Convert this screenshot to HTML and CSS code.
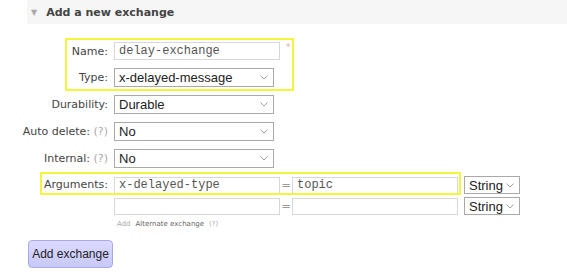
FILE: index.html
```html
<!DOCTYPE html>
<html lang="en">
<head>
    <meta charset="UTF-8">
    <title>Add a new exchange</title>
    <link rel="stylesheet" href="styles.css">
</head>
<body>
    <div class="page">
        <!-- Section header -->
        <div class="section-header">
            <span class="arrow">&#9660;</span>
            <span class="section-title">Add a new exchange</span>
        </div>

        <form class="form" onsubmit="return false">
            <div class="row">
                <label class="label" for="name">Name:</label>
                <input class="text-input name-input" id="name" type="text" value="delay-exchange">
                <span class="mandatory">*</span>
            </div>

            <div class="row">
                <label class="label">Type:</label>
                <div class="select">
                    <span>x-delayed-message</span>
                    <svg class="chevron" width="8" height="5" viewBox="0 0 8 5"><path d="M0.5 0.5 L4 4 L7.5 0.5" fill="none" stroke="#a0a0a0" stroke-width="1"/></svg>
                </div>
            </div>

            <div class="row">
                <label class="label">Durability:</label>
                <div class="select">
                    <span>Durable</span>
                    <svg class="chevron" width="8" height="5" viewBox="0 0 8 5"><path d="M0.5 0.5 L4 4 L7.5 0.5" fill="none" stroke="#a0a0a0" stroke-width="1"/></svg>
                </div>
            </div>

            <div class="row">
                <label class="label">Auto delete: <span class="help">(?)</span></label>
                <div class="select">
                    <span>No</span>
                    <svg class="chevron" width="8" height="5" viewBox="0 0 8 5"><path d="M0.5 0.5 L4 4 L7.5 0.5" fill="none" stroke="#a0a0a0" stroke-width="1"/></svg>
                </div>
            </div>

            <div class="row">
                <label class="label">Internal: <span class="help">(?)</span></label>
                <div class="select">
                    <span>No</span>
                    <svg class="chevron" width="8" height="5" viewBox="0 0 8 5"><path d="M0.5 0.5 L4 4 L7.5 0.5" fill="none" stroke="#a0a0a0" stroke-width="1"/></svg>
                </div>
            </div>

            <div class="row args-row">
                <label class="label">Arguments:</label>
                <div class="args">
                    <div class="arg">
                        <input class="text-input arg-input" type="text" value="x-delayed-type">
                        <span class="equals">=</span>
                        <input class="text-input arg-input" type="text" value="topic">
                        <div class="select small-select">
                            <span>String</span>
                            <svg class="chevron" width="8" height="5" viewBox="0 0 8 5"><path d="M0.5 0.5 L4 4 L7.5 0.5" fill="none" stroke="#a0a0a0" stroke-width="1"/></svg>
                        </div>
                    </div>
                    <div class="arg">
                        <input class="text-input arg-input" type="text" value="">
                        <span class="equals">=</span>
                        <input class="text-input arg-input" type="text" value="">
                        <div class="select small-select">
                            <span>String</span>
                            <svg class="chevron" width="8" height="5" viewBox="0 0 8 5"><path d="M0.5 0.5 L4 4 L7.5 0.5" fill="none" stroke="#a0a0a0" stroke-width="1"/></svg>
                        </div>
                    </div>
                    <div class="arg-hints">
                        <span class="add">Add</span>
                        <span class="hint">Alternate exchange</span>
                        <span class="help">(?)</span>
                    </div>
                </div>
            </div>

            <button class="submit" type="submit">Add exchange</button>
        </form>

        <!-- yellow annotation boxes -->
        <div class="highlight hl-name"></div>
        <div class="highlight hl-args"></div>
    </div>
</body>
</html>
```

FILE: styles.css
```css
body {
    margin: 0;
    background: #fff;
    font-family: "DejaVu Sans", Verdana, sans-serif;
    font-size: 11px;
    color: #444;
}
.page {
    position: relative;
    width: 567px;
    height: 276px;
    overflow: hidden;
}
.section-header {
    margin-left: 27px;
    height: 24px;
    background: #f6f6f6;
    display: flex;
    align-items: center;
    gap: 9px;
    padding-left: 4px;
}
.arrow {
    font-size: 8px;
    color: #aaa;
}
.section-title {
    font-weight: bold;
    font-size: 11px;
    color: #444;
}
.form {
    display: flex;
    flex-direction: column;
    gap: 8px;
    padding-top: 18px;
}
.row {
    display: flex;
    align-items: center;
}
.args-row {
    align-items: flex-start;
}
.label {
    width: 108px;
    padding-right: 6px;
    text-align: right;
    flex-shrink: 0;
    white-space: nowrap;
    color: #444;
}
.args-row .label {
    padding-top: 2px;
}
.help {
    color: #aaa;
}
.text-input {
    box-sizing: border-box;
    height: 18px;
    border: 1px solid #d8d8d8;
    background: #fff;
    padding: 0 4px;
    font-family: "Liberation Mono", "Courier New", monospace;
    font-size: 12px;
    color: #555;
    outline: none;
}
.name-input {
    width: 166px;
}
.mandatory {
    color: #e8a0a0;
    font-size: 9px;
    margin-left: 6px;
    align-self: flex-start;
}
.select {
    box-sizing: border-box;
    width: 160px;
    height: 19px;
    border: 1px solid #a9a9a9;
    background: #fff;
    display: flex;
    align-items: center;
    justify-content: space-between;
    padding: 0 5px 0 4px;
    font-family: "Liberation Sans", Arial, sans-serif;
    font-size: 13px;
    color: #222;
}
.chevron {
    flex-shrink: 0;
}
.args {
    display: flex;
    flex-direction: column;
    gap: 3px;
}
.arg {
    display: flex;
    align-items: center;
}
.arg-input {
    width: 166px;
    height: 17px;
}
.equals {
    width: 12px;
    text-align: center;
    color: #999;
}
.small-select {
    width: 56px;
    margin-left: 6px;
    height: 18px;
}
.arg-hints {
    font-size: 7px;
    padding-left: 3px;
    padding-top: 2px;
    display: flex;
    gap: 5px;
}
.add {
    color: #aaa;
}
.hint {
    color: #666;
}
.submit {
    align-self: flex-start;
    margin-left: 28px;
    margin-top: 4px;
    width: 85px;
    height: 28px;
    border: 1px solid #a9a9e6;
    border-radius: 4px;
    background: linear-gradient(#dadaff, #c8c8fa);
    font-family: "Liberation Sans", Arial, sans-serif;
    font-size: 12px;
    color: #222;
    padding: 0;
}
.highlight {
    position: absolute;
    border: 2px solid #f4f43a;
    box-sizing: border-box;
}
.hl-name {
    left: 65px;
    top: 38px;
    width: 229px;
    height: 53px;
}
.hl-args {
    left: 40px;
    top: 172px;
    width: 421px;
    height: 23px;
}
```
